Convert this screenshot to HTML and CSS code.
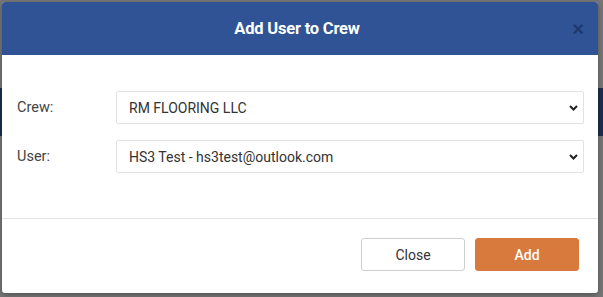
FILE: index.html
```html
<!DOCTYPE html>
<html lang="en">
<head>
  <meta charset="UTF-8">
  <meta name="viewport" content="width=device-width, initial-scale=1.0">
  <title>Add User to Crew</title>
  <link rel="stylesheet" href="styles.css">
</head>
<body>
  <div class="modal">
    <div class="modal-header">
      <span></span>
      <h4 class="modal-title">Add User to Crew</h4>
      <button class="close-btn">&times;</button>
    </div>

    <div class="modal-body">
      <div class="form-row">
        <label for="crew">Crew:</label>
        <select id="crew">
          <option>RM FLOORING LLC</option>
        </select>
      </div>
      <div class="form-row">
        <label for="user">User:</label>
        <select id="user">
          <option>HS3 Test - hs3test@outlook.com</option>
        </select>
      </div>
    </div>

    <div class="modal-footer">
      <button class="btn btn-default">Close</button>
      <button class="btn btn-primary">Add</button>
    </div>
  </div>
</body>
</html>
```

FILE: styles.css
```css
* { box-sizing: border-box; }
body {
  margin: 0;
  padding: 2px 0 0 2px;
  height: 297px;
  overflow: hidden;
  font-family: Roboto, 'Liberation Sans', sans-serif;
  background: linear-gradient(to bottom, #777 88px, #1c2d4f 88px, #1c2d4f 136px, #777 136px);
}
.modal {
  width: 596px;
  height: 291px;
  background: #fff;
  border-radius: 3px;
  box-shadow: 0 2px 6px rgba(0,0,0,0.3);
  overflow: hidden;
}
.modal-header {
  height: 53px;
  background: #2f5394;
  display: grid;
  grid-template-columns: 1fr auto 1fr;
  align-items: center;
}
.modal-title {
  margin: 0 0 0 -6px;
  color: #fff;
  font-family: Roboto, sans-serif;
  font-size: 16.5px;
  font-weight: bold;
  letter-spacing: -0.2px;
}
.close-btn {
  justify-self: end;
  margin-right: 14px;
  background: transparent;
  border: none;
  color: #1e3a6e;
  font-family: Arial, 'Liberation Sans', sans-serif;
  font-size: 20px;
  font-weight: bold;
  line-height: 1;
  padding: 0;
  cursor: pointer;
}
.modal-body {
  padding: 36px 14px 45px 15px;
  border-bottom: 1px solid #e3e3e3;
  display: flex;
  flex-direction: column;
  gap: 16px;
}
.form-row {
  display: flex;
  align-items: center;
}
.form-row label {
  width: 99px;
  font-size: 14.5px;
  color: #444;
}
.form-row select {
  flex: 1;
  height: 33px;
  padding: 0 12px;
  border: 1px solid #e2e2e2;
  border-radius: 2px;
  font-family: Roboto, sans-serif;
  font-size: 14px;
  color: #333;
  appearance: none;
  -webkit-appearance: none;
  background: #fff url("data:image/svg+xml,%3Csvg xmlns='http://www.w3.org/2000/svg' width='9' height='6' viewBox='0 0 9 6'%3E%3Cpath d='M1 1l3.5 3.5L8 1' fill='none' stroke='%23222' stroke-width='2'/%3E%3C/svg%3E") no-repeat right 5px center;
}
.modal-footer {
  padding: 19px 19px 0;
  display: flex;
  justify-content: flex-end;
  gap: 10px;
}
.btn {
  width: 104px;
  height: 33px;
  border-radius: 3px;
  font-family: Roboto, sans-serif;
  font-size: 14px;
  cursor: pointer;
}
.btn-default {
  background: #fff;
  border: 1px solid #cfcfcf;
  color: #333;
}
.btn-primary {
  background: #d8793d;
  border: 1px solid #d8793d;
  color: #fff;
  font-weight: 500;
}
```
